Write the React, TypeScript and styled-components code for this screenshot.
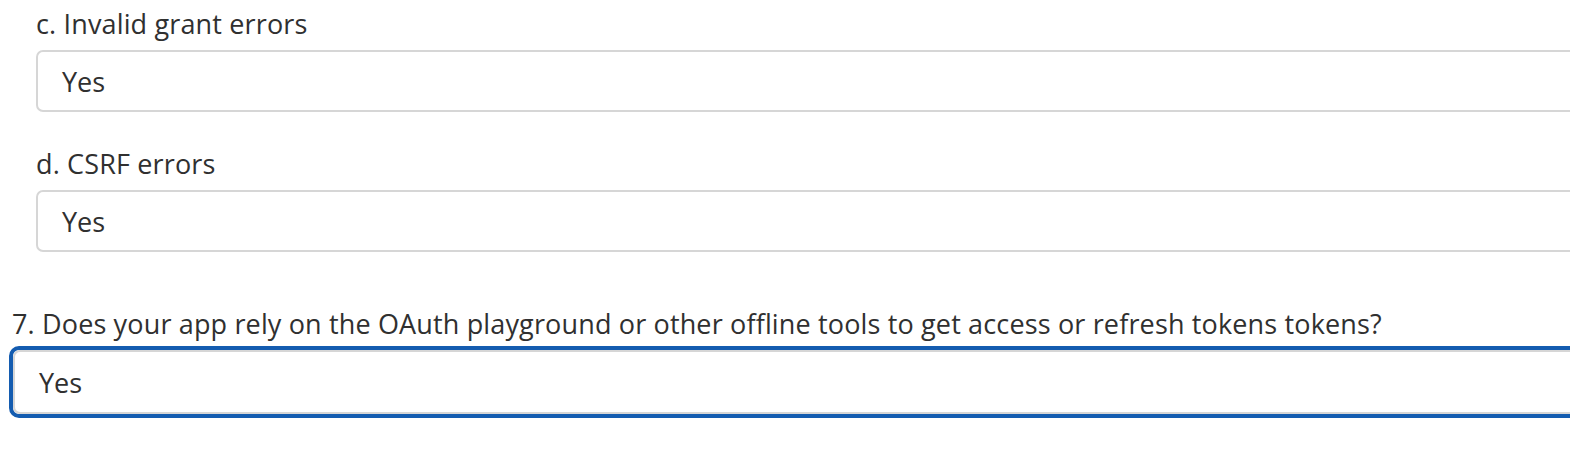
import React from 'react'
import styled, { createGlobalStyle } from 'styled-components'

const GlobalStyle = createGlobalStyle`
  html, body {
    margin: 0;
    padding: 0;
    background: #ffffff;
  }
  body {
    font-family: "Open Sans", Lato, sans-serif;
    color: #303030;
    overflow: hidden;
  }
`

const Page = styled.div`
  width: 1640px;
  padding-top: 8px;
`

const SubGroup = styled.div`
  padding-left: 36px;
`

const Field = styled.div<{ spacing?: number }>`
  display: flex;
  flex-direction: column;
  margin-bottom: ${(p) => p.spacing ?? 0}px;
`

const Label = styled.label<{ indent?: number; gap?: number }>`
  font-size: 27px;
  line-height: 32px;
  letter-spacing: 0.15px;
  padding-left: ${(p) => p.indent ?? 0}px;
  margin-bottom: ${(p) => p.gap ?? 10}px;
`

const FocusRing = styled.div`
  margin-left: 9px;
  border: 4px solid #145cb0;
  border-radius: 10px;
`

const Input = styled.div<{ tall?: boolean }>`
  box-sizing: border-box;
  height: ${(p) => (p.tall ? 64 : 62)}px;
  display: flex;
  align-items: center;
  padding: 0 24px;
  font-size: 27px;
  border: 2px solid #d6d6d6;
  border-radius: 7px;
  background: #fff;
`

const App: React.FC = () => (
  <>
    <GlobalStyle />
    <Page>
      <SubGroup>
        <Field spacing={36}>
          <Label>c. Invalid grant errors</Label>
          <Input>Yes</Input>
        </Field>
        <Field spacing={56}>
          <Label>d. CSRF errors</Label>
          <Input>Yes</Input>
        </Field>
      </SubGroup>
      <Field>
        <Label indent={12} gap={6}>
          7. Does your app rely on the OAuth playground or other offline tools to get access or refresh tokens tokens?
        </Label>
        <FocusRing>
          <Input tall>Yes</Input>
        </FocusRing>
      </Field>
    </Page>
  </>
)

export default App
